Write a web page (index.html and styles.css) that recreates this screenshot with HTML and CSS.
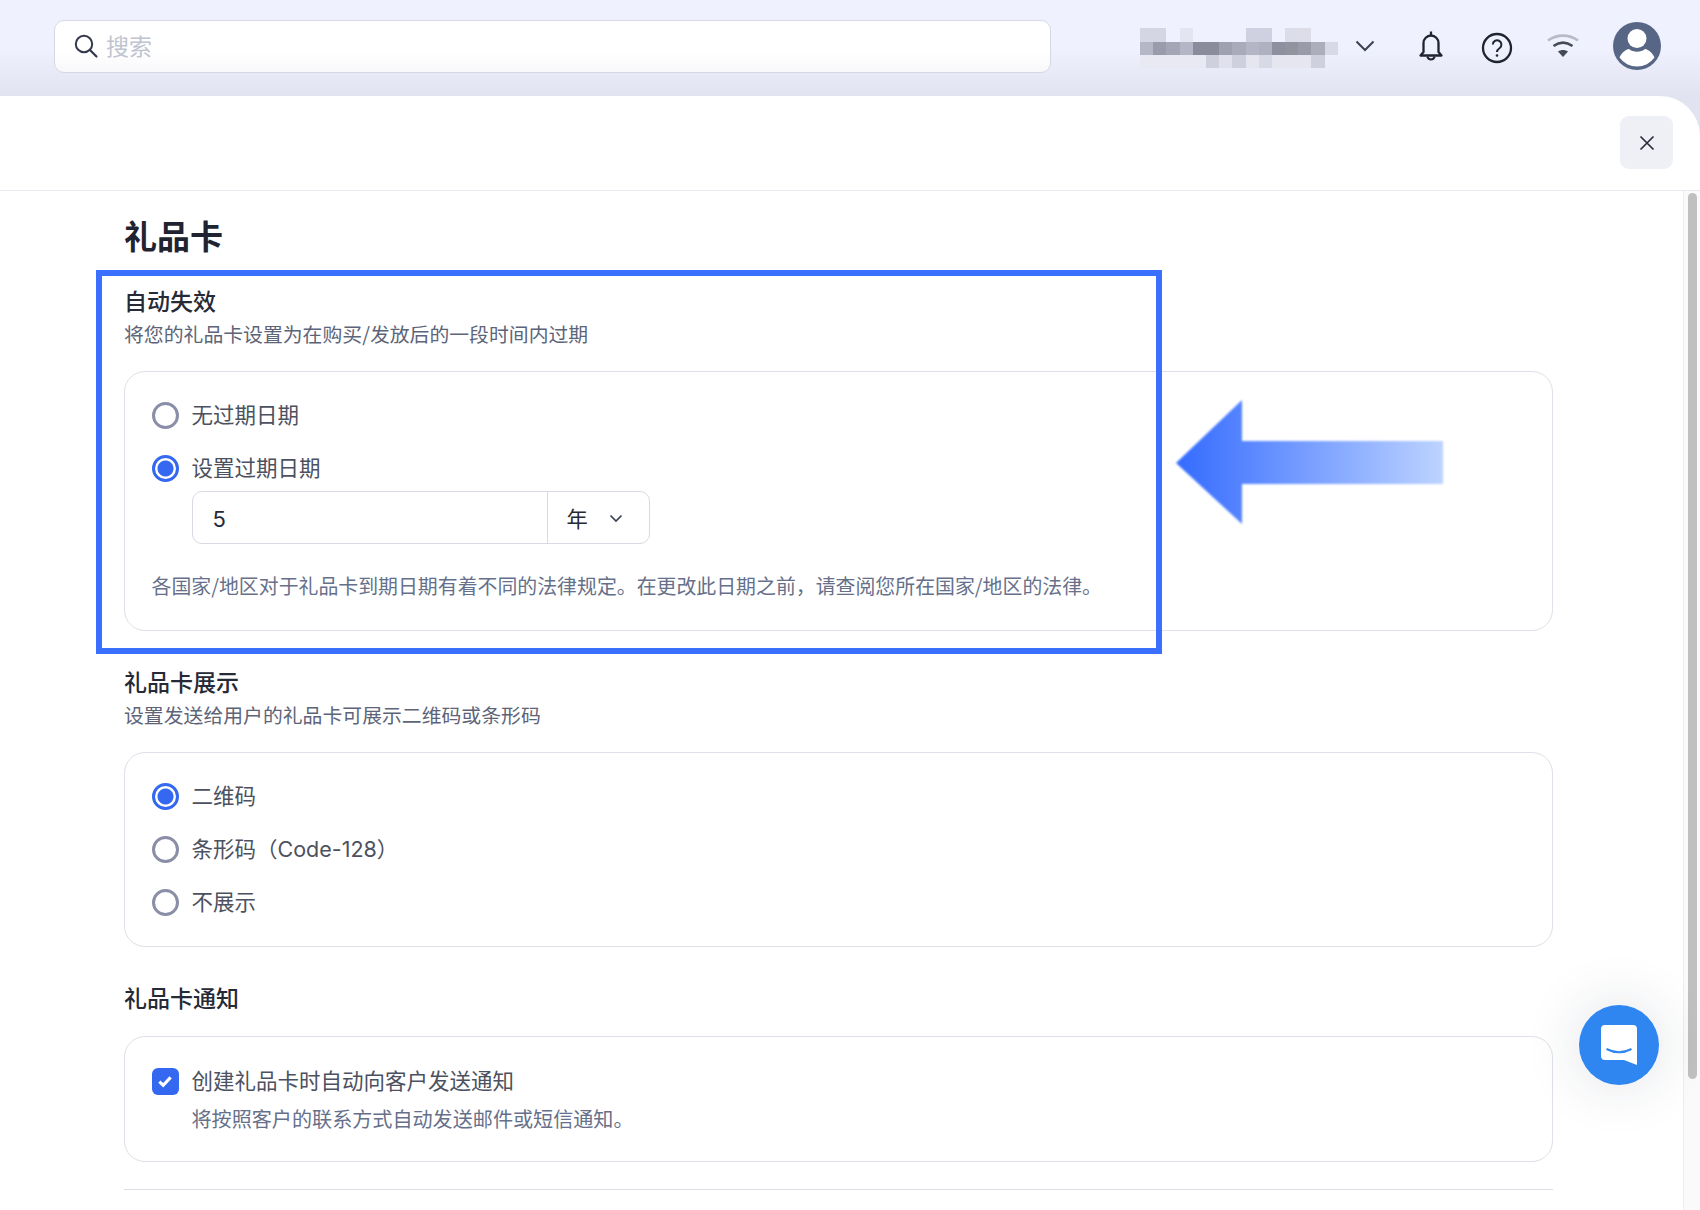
FILE: index.html
```html
<!DOCTYPE html>
<html lang="zh-CN">
<head>
<meta charset="utf-8">
<title>礼品卡</title>
<link rel="stylesheet" href="styles.css">
</head>
<body>
<div class="app">
  <header class="topbar">
    <div class="search">
      <svg class="search-icon" viewBox="0 0 26 26" width="26" height="26"><circle cx="11" cy="11" r="8.2" fill="none" stroke="#33384a" stroke-width="2"/><path d="M17 17l6.5 6.5" stroke="#33384a" stroke-width="2.2" stroke-linecap="round"/></svg>
      <span class="search-text">搜索</span>
    </div>
    <svg class="blurname" viewBox="0 0 198 40" width="198" height="40" shape-rendering="crispEdges">
      <g fill="#d5d6e4"><rect x="0" y="0" width="26" height="14"/></g>
      <rect x="40" y="0" width="13" height="14" fill="#e4e5f0"/>
      <rect x="106" y="0" width="26" height="14" fill="#d0d1e0"/>
      <rect x="145" y="0" width="26" height="14" fill="#dcdde9"/>
      <rect x="0" y="14" width="13" height="13" fill="#b5b6c6"/>
      <rect x="13" y="14" width="13" height="13" fill="#9a9bab"/>
      <rect x="26" y="14" width="14" height="13" fill="#a5a6b5"/>
      <rect x="40" y="14" width="13" height="13" fill="#b5b6c5"/>
      <rect x="53" y="14" width="26" height="13" fill="#8a8b9b"/>
      <rect x="79" y="14" width="13" height="13" fill="#a0a1b0"/>
      <rect x="92" y="14" width="14" height="13" fill="#aaabba"/>
      <rect x="106" y="14" width="13" height="13" fill="#b5b6c5"/>
      <rect x="119" y="14" width="13" height="13" fill="#b0b1c0"/>
      <rect x="132" y="14" width="13" height="13" fill="#8f909f"/>
      <rect x="145" y="14" width="13" height="13" fill="#92939f"/>
      <rect x="158" y="14" width="13" height="13" fill="#9a9ba9"/>
      <rect x="171" y="14" width="14" height="13" fill="#adaebc"/>
      <rect x="185" y="14" width="13" height="13" fill="#d8d9e6"/>
      <rect x="0" y="27" width="66" height="13" fill="#e8e9f2"/>
      <rect x="66" y="27" width="13" height="13" fill="#ced0de"/>
      <rect x="79" y="27" width="13" height="13" fill="#e0e1ec"/>
      <rect x="92" y="27" width="14" height="13" fill="#ced0de"/>
      <rect x="106" y="27" width="13" height="13" fill="#e5e6f0"/>
      <rect x="119" y="27" width="13" height="13" fill="#d8d9e6"/>
      <rect x="132" y="27" width="39" height="13" fill="#e5e6f0"/>
      <rect x="171" y="27" width="14" height="13" fill="#cfd0de"/>
    </svg>
    <svg class="ticon chevron" viewBox="0 0 32 32" width="32" height="32"><path d="M7.5 11.5l8.5 8.500 8.500-8.500" fill="none" stroke="#3c4152" stroke-width="2"/></svg>
    <svg class="ticon" viewBox="0 0 32 32" width="32" height="32"><path d="M16 1.500v3M8.500 22V13a7.500 7.500 0 0 1 15 0v9l3 3.500H5.500z" fill="none" stroke="#20242e" stroke-width="2.300" stroke-linejoin="round"/><path d="M12.300 26.500a3.800 3.800 0 0 0 7.400 0" fill="none" stroke="#20242e" stroke-width="2"/></svg>
    <svg class="ticon ticon-low" viewBox="0 0 32 32" width="32" height="32"><circle cx="16" cy="16" r="14" fill="none" stroke="#20242e" stroke-width="2.300"/><path d="M11.800 12.500a4.300 4.300 0 1 1 6.900 3.500c-1.700 1.200-2.700 2-2.700 4" fill="none" stroke="#20242e" stroke-width="2"/><circle cx="16" cy="23.500" r="1.300" fill="#20242e"/></svg>
    <svg class="ticon ticon-mid" viewBox="0 0 32 32" width="32" height="32"><path d="M1 9.500c9-6.500 21-6.500 30 0" fill="none" stroke="#b8bac6" stroke-width="2.600"/><path d="M6.500 15c6-4.300 13-4.300 19 0" fill="none" stroke="#454a58" stroke-width="2.600"/><path d="M11 20.500l5 5.500 5-5.500c-3-2-7-2-10 0z" fill="#454a58"/></svg>
    <svg class="avatar" viewBox="0 0 48 48" width="48" height="48"><circle cx="24" cy="24" r="24" fill="#576684"/><circle cx="24" cy="16.500" r="9.500" fill="#fff"/><path d="M6.500 35.500C9 30 13 27.500 16 27c4 3.500 12 3.500 16 0 3 .5 7 3 9.500 8.500a21.500 21.500 0 0 1-35 0z" fill="#fff"/></svg>
  </header>

  <main class="panel">
    <div class="panel-head">
      <button class="close" type="button"><svg viewBox="0 0 16 16" width="16" height="16"><path d="M1.500 1.500l13 13M14.500 1.500l-13 13" stroke="#2a2e3a" stroke-width="1.700"/></svg></button>
    </div>
    <div class="panel-body">
      <div class="content">
        <h1 class="page-title">礼品卡</h1>

        <h2 class="sec-title">自动失效</h2>
        <p class="sec-sub">将您的礼品卡设置为在购买/发放后的一段时间内过期</p>
        <section class="card card-a">
          <div class="opt"><span class="radio"></span><span class="opt-label">无过期日期</span></div>
          <div class="opt opt-next"><span class="radio on"></span><span class="opt-label">设置过期日期</span></div>
          <div class="field">
            <span class="field-value">5</span>
            <span class="field-unit">年<svg viewBox="0 0 14 14" width="14" height="14"><path d="M1.500 4.500L7 10l5.500-5.500" fill="none" stroke="#3c4152" stroke-width="1.700"/></svg></span>
          </div>
          <p class="help">各国家/地区对于礼品卡到期日期有着不同的法律规定。在更改此日期之前，请查阅您所在国家/地区的法律。</p>
        </section>

        <h2 class="sec-title sec-gap">礼品卡展示</h2>
        <p class="sec-sub">设置发送给用户的礼品卡可展示二维码或条形码</p>
        <section class="card card-b">
          <div class="opt"><span class="radio on"></span><span class="opt-label">二维码</span></div>
          <div class="opt opt-next"><span class="radio"></span><span class="opt-label">条形码（Code-128）</span></div>
          <div class="opt opt-next"><span class="radio"></span><span class="opt-label">不展示</span></div>
        </section>

        <h2 class="sec-title sec-gap sec-single">礼品卡通知</h2>
        <section class="card card-c">
          <div class="opt"><span class="check"><svg viewBox="0 0 16 16" width="18" height="18"><path d="M3 8.500l3.400 3.300L13 4.800" fill="none" stroke="#fff" stroke-width="2.800"/></svg></span><span class="opt-label">创建礼品卡时自动向客户发送通知</span></div>
          <p class="opt-desc">将按照客户的联系方式自动发送邮件或短信通知。</p>
        </section>
        <hr class="rule">
      </div>
      <div class="rail"><div class="thumb"></div></div>
    </div>
  </main>

  <div class="highlight"></div>
  <svg class="arrow" viewBox="0 0 268 124" width="268" height="124">
    <defs><linearGradient id="ag" x1="0" y1="0" x2="1" y2="0"><stop offset="0" stop-color="#346bff"/><stop offset="1" stop-color="#bdd3ff"/></linearGradient></defs>
    <path d="M0 63L66 0V41H267V84H66V124z" fill="url(#ag)"/>
  </svg>
  <div class="chat">
    <svg viewBox="0 0 80 80" width="80" height="80"><path d="M26 20h28a4 4 0 0 1 4 4v36l-13-5H26a4 4 0 0 1-4-4V24a4 4 0 0 1 4-4z" fill="#fff"/><path d="M27.500 44q12.500 6.500 25 0" fill="none" stroke="#2f86f0" stroke-width="2"/></svg>
  </div>
</div>
</body>
</html>
```

FILE: styles.css
```css
* { box-sizing: border-box; }
html, body { margin: 0; padding: 0; }
body {
  font-family: "Noto Sans CJK SC", "Noto Sans", sans-serif;
  color: #4a4f5e;
  background: #fff;
}
.app {
  position: relative;
  width: 1700px;
  height: 1210px;
  overflow: hidden;
  display: flex;
  flex-direction: column;
  background: linear-gradient(#eff2fe 0, #eff2fe 48px, #e1e4f0 96px, #e1e4f0 140px);
}
.topbar {
  flex: 0 0 96px;
  display: flex;
  align-items: center;
  gap: 34px;
  padding: 0 38px 4px 54px;
}
.search {
  width: 997px;
  height: 53px;
  margin-right: 56px;
  display: flex;
  align-items: center;
  padding-left: 18px;
  gap: 7px;
  border: 1px solid #d6d8e6;
  border-radius: 10px;
  background: linear-gradient(#fff 60%, #f8f8fb);
}
.search-icon { flex: none; }
.search-text { font-size: 23px; line-height: 30px; padding-bottom: 2px; color: #c0c3d0; }
.blurname { flex: none; margin: 4px -23px 0 -1px; }
.ticon, .avatar { flex: none; }
.ticon-low { margin-top: 4px; }
.ticon-mid { margin-top: 2px; }
.panel {
  flex: 1;
  display: flex;
  flex-direction: column;
  min-height: 0;
  background: #fff;
  border-top-right-radius: 40px;
}
.panel-head {
  flex: 0 0 95px;
  display: flex;
  justify-content: flex-end;
  padding: 20px 27px 0 0;
  border-bottom: 1px solid #e8e9ee;
}
.close {
  width: 53px;
  height: 53px;
  padding: 0;
  border: 0;
  border-radius: 9px;
  background: #eef0f5;
  display: flex;
  align-items: center;
  justify-content: center;
}
.panel-body { flex: 1; display: flex; min-height: 0; }
.content { flex: 1; min-width: 0; padding: 22px 130px 0 124px; }
.page-title {
  margin: 0 0 28px;
  font-size: 33px;
  line-height: 44px;
  font-weight: 600;
  color: #1f2430;
}
.sec-title {
  margin: 0;
  font-size: 23px;
  line-height: 30px;
  font-weight: 500;
  color: #262a36;
}
.sec-gap { margin-top: 35px; }
.sec-single { margin-bottom: 24px; }
.sec-sub {
  margin: 5px 0 23px;
  font-size: 19.850px;
  line-height: 28px;
  color: #5d6478;
}
.card {
  border: 1px solid #dfe0e8;
  border-radius: 21px;
  padding: 28px 27px 30px 26.500px;
  background: #fff;
}
.card-b { padding-top: 28px; padding-bottom: 29px; }
.card-c { padding-top: 29px; padding-bottom: 28px; }
.opt {
  height: 30px;
  display: flex;
  align-items: center;
  gap: 13px;
}
.opt-next { margin-top: 23px; }
.opt-label {
  font-family: Inter, "Noto Sans CJK SC", sans-serif;
  font-size: 21.500px;
  line-height: 30px;
  color: #4c5160;
}
.radio {
  flex: none;
  width: 27px;
  height: 27px;
  border-radius: 50%;
  border: 3px solid #8a8ea6;
  background: #fff;
}
.radio.on {
  border-color: #3568f0;
  background: radial-gradient(circle, #3568f0 0 7.500px, #fff 8.500px);
}
.check {
  flex: none;
  width: 27px;
  height: 27px;
  border-radius: 6px;
  background: #3568f0;
  display: flex;
  align-items: center;
  justify-content: center;
}
.field {
  margin: 8px 0 0 40px;
  width: 458px;
  height: 53px;
  display: flex;
  border: 1px solid #d8dae3;
  border-radius: 10px;
}
.field-value {
  flex: 1;
  padding-left: 20px;
  font-family: Inter, sans-serif;
  font-size: 22px;
  line-height: 54px;
  color: #262a36;
}
.field-unit {
  flex: 0 0 102px;
  display: flex;
  align-items: center;
  gap: 21px;
  padding-left: 19px;
  border-left: 1px solid #d8dae3;
  font-size: 21.300px;
  color: #262a36;
}
.help {
  margin: 28px 0 0;
  font-size: 19.900px;
  line-height: 28px;
  color: #66708a;
}
.opt-desc {
  margin: 9px 0 0 40px;
  font-size: 20.100px;
  line-height: 28px;
  color: #66708a;
}
.rule {
  margin: 27px 0 0;
  border: 0;
  border-top: 1px solid #dcdde4;
}
.rail {
  flex: 0 0 17px;
  padding: 2px 0 0 4px;
  border-left: 1px solid #eceef2;
  background: #fafafa;
}
.thumb {
  width: 9px;
  height: 886px;
  border-radius: 5px;
  background: #c0c0c0;
}
.highlight {
  position: absolute;
  left: 96px;
  top: 270px;
  width: 1066px;
  height: 384px;
  border: 6px solid #3a6fff;
}
.arrow {
  position: absolute;
  left: 1176px;
  top: 400px;
  filter: blur(0.8px);
}
.chat {
  position: absolute;
  left: 1579px;
  top: 1005px;
  width: 80px;
  height: 80px;
  border-radius: 50%;
  background: #2f86f0;
  box-shadow: 0 0 60px rgba(30, 40, 70, .14);
}
.chat svg { display: block; }
```
